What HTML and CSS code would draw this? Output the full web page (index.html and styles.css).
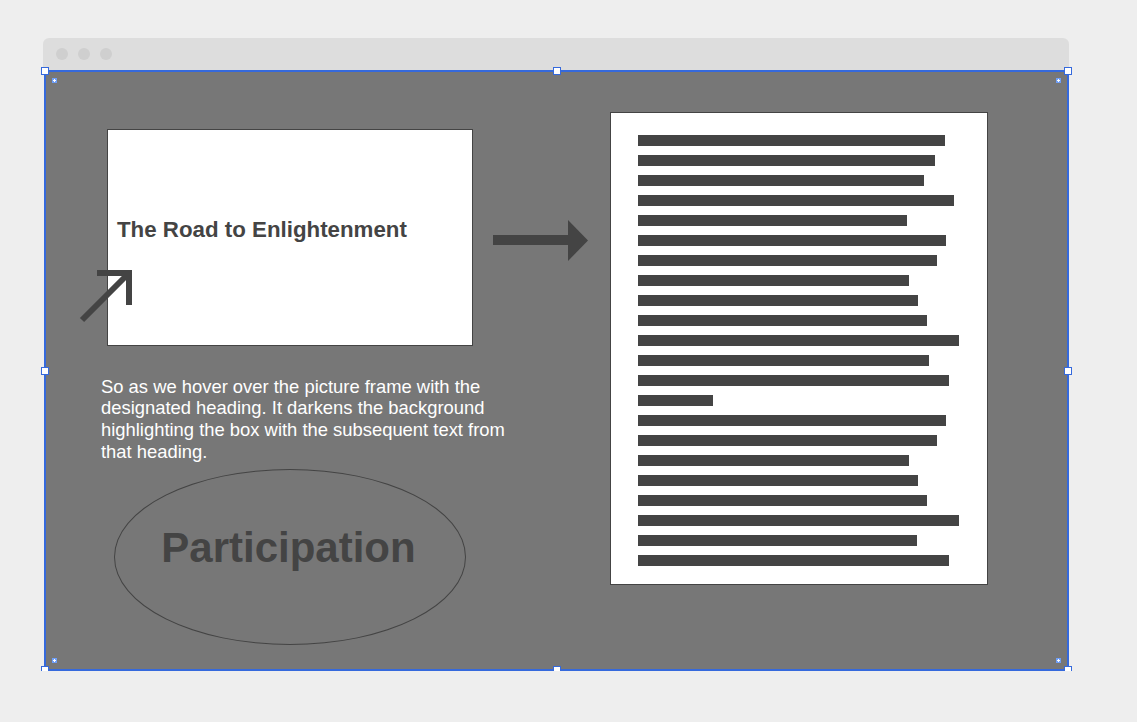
FILE: index.html
```html
<!DOCTYPE html>
<html>
<head>
<meta charset="utf-8">
<link rel="stylesheet" href="styles.css">
</head>
<body>
<div class="window">
  <div class="titlebar">
    <span class="dot"></span><span class="dot"></span><span class="dot"></span>
  </div>
  <div class="canvas">
    <div class="frame">
      <h2 class="frame-title">The Road to Enlightenment</h2>
    </div>
    <svg class="diag-arrow" width="56" height="56" viewBox="0 0 56 56">
      <path d="M4 52 L50 6" stroke="#444" stroke-width="6" fill="none"/>
      <path d="M19 5 H51 V37" stroke="#444" stroke-width="6" fill="none" stroke-linejoin="miter"/>
    </svg>
    <svg class="right-arrow" width="95" height="41" viewBox="0 0 95 41">
      <rect x="0" y="15" width="76" height="10" fill="#444"/>
      <polygon points="75,0 95,20.5 75,41" fill="#444"/>
    </svg>
    <p class="note">So as we hover over the picture frame with the designated heading. It darkens the background highlighting the box with the subsequent text from that heading.</p>
    <div class="ellipse"><span>Participation</span></div>
    <div class="doc">
      <div class="line" style="width:307px"></div>
      <div class="line" style="width:297px"></div>
      <div class="line" style="width:286px"></div>
      <div class="line" style="width:316px"></div>
      <div class="line" style="width:269px"></div>
      <div class="line" style="width:308px"></div>
      <div class="line" style="width:299px"></div>
      <div class="line" style="width:271px"></div>
      <div class="line" style="width:280px"></div>
      <div class="line" style="width:289px"></div>
      <div class="line" style="width:321px"></div>
      <div class="line" style="width:291px"></div>
      <div class="line" style="width:311px"></div>
      <div class="line" style="width:75px"></div>
      <div class="line" style="width:308px"></div>
      <div class="line" style="width:299px"></div>
      <div class="line" style="width:271px"></div>
      <div class="line" style="width:280px"></div>
      <div class="line" style="width:289px"></div>
      <div class="line" style="width:321px"></div>
      <div class="line" style="width:279px"></div>
      <div class="line" style="width:311px"></div>
    </div>
    <span class="handle h-tl"></span>
    <span class="handle h-tm"></span>
    <span class="handle h-tr"></span>
    <span class="handle h-ml"></span>
    <span class="handle h-mr"></span>
    <span class="handle h-bl"></span>
    <span class="handle h-bm"></span>
    <span class="handle h-br"></span>
    <span class="point p-tl"></span>
    <span class="point p-tr"></span>
    <span class="point p-bl"></span>
    <span class="point p-br"></span>
  </div>
</div>
</body>
</html>
```

FILE: styles.css
```css
html, body {
  margin: 0;
  padding: 0;
  background: #eeeeee;
  font-family: "Liberation Sans", Arial, sans-serif;
}

.window {
  width: 1026px;
  margin: 38px 0 0 43px;
}

.titlebar {
  height: 32px;
  background: #dddddd;
  border-radius: 6px 6px 0 0;
  display: flex;
  align-items: center;
  gap: 10px;
  padding-left: 13px;
  box-sizing: border-box;
}

.dot {
  width: 12px;
  height: 12px;
  border-radius: 50%;
  background: #cfcfcf;
}

.canvas {
  position: relative;
  margin-left: 1px;
  width: 1025px;
  height: 601px;
  box-sizing: border-box;
  background: #777777;
  border: 2px solid #3569dc;
}

.frame {
  position: absolute;
  left: 61px;
  top: 57px;
  width: 366px;
  height: 217px;
  box-sizing: border-box;
  background: #ffffff;
  border: 1px solid #444444;
  padding: 88px 0 0 9px;
}

.frame-title {
  margin: 0;
  font-size: 22.3px;
  line-height: 24px;
  font-weight: bold;
  color: #444444;
}

.diag-arrow {
  position: absolute;
  left: 32px;
  top: 196px;
}

.right-arrow {
  position: absolute;
  left: 447px;
  top: 148px;
}

.note {
  position: absolute;
  left: 55px;
  top: 303.5px;
  width: 420px;
  margin: 0;
  font-size: 18.4px;
  line-height: 21.7px;
  color: #ffffff;
}

.ellipse {
  position: absolute;
  left: 68px;
  top: 397px;
  width: 352px;
  height: 176px;
  box-sizing: border-box;
  border: 1px solid #444444;
  border-radius: 50%;
  display: flex;
  align-items: center;
  justify-content: center;
  padding-bottom: 18px;
}

.ellipse span {
  font-size: 42px;
  font-weight: bold;
  color: #444444;
  margin-right: 3px;
}

.doc {
  position: absolute;
  left: 564px;
  top: 40px;
  width: 378px;
  height: 473px;
  box-sizing: border-box;
  background: #ffffff;
  border: 1px solid #444444;
  padding: 22px 0 0 27px;
  display: flex;
  flex-direction: column;
  gap: 9px;
}

.line {
  height: 11px;
  background: #444444;
  flex: none;
}

.handle {
  position: absolute;
  width: 8px;
  height: 8px;
  box-sizing: border-box;
  background: #ffffff;
  border: 1.5px solid #3569dc;
  transform: translate(-50%, -50%);
}

.h-tl { left: -1px; top: -1px; }
.h-tm { left: 50%; top: -1px; }
.h-tr { left: calc(100% + 1px); top: -1px; }
.h-ml { left: -1px; top: 50%; }
.h-mr { left: calc(100% + 1px); top: 50%; }
.h-bl { left: -1px; top: calc(100% + 1px); }
.h-bm { left: 50%; top: calc(100% + 1px); }
.h-br { left: calc(100% + 1px); top: calc(100% + 1px); }

.point {
  position: absolute;
  width: 5px;
  height: 5px;
  background: #6f9ef5;
}

.point::before,
.point::after {
  content: "";
  position: absolute;
  background: #ffffff;
}

.point::before {
  left: 2px;
  top: 1px;
  width: 1px;
  height: 3px;
}

.point::after {
  left: 1px;
  top: 2px;
  width: 3px;
  height: 1px;
}

.p-tl { left: 6px; top: 6px; }
.p-tr { right: 6px; top: 6px; }
.p-bl { left: 6px; bottom: 6px; }
.p-br { right: 6px; bottom: 6px; }
```
